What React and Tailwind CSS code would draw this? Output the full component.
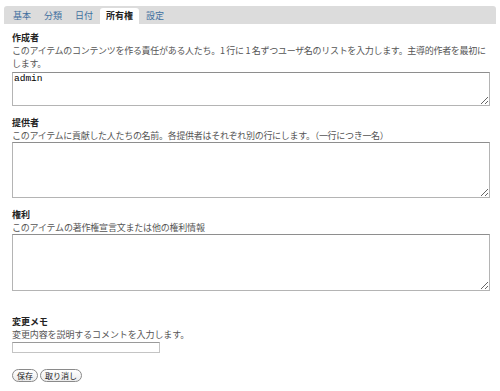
import React from 'react';

const tabs = ['基本', '分類', '日付', '所有権', '設定'];

const jp = { fontFamily: '"Noto Sans CJK JP", "Noto Sans", sans-serif' };

const Field = ({ label, children, className = '' }) => (
  <div className={className}>
    <div className="text-[9px] leading-[13px] font-bold text-[#222]">{label}</div>
    {children}
  </div>
);

const App = () => {
  return (
    <div className="w-[500px] h-[391px] bg-white overflow-hidden" style={jp}>
      {/* Tabs */}
      <div className="mx-[4px] mt-[6px] w-[492px] h-[18px] bg-[#dcdcdc] rounded-t-[3px] pt-[2px] pl-[3px] flex gap-[1px]">
        {tabs.map((t) => (
          <div
            key={t}
            className={`h-[16px] px-[6px] text-[9px] leading-[16px] ${
              t === '所有権'
                ? 'bg-white rounded-t-[3px] font-bold text-[#222]'
                : 'text-[#3f6f9f]'
            }`}
          >
            {t}
          </div>
        ))}
      </div>

      <div className="px-[12px]">
        {/* Creators */}
        <Field label="作成者" className="mt-[7px]">
          <div className="text-[9px] leading-[13px] text-[#555] tracking-[-0.3px]">
            <span className="whitespace-nowrap">このアイテムのコンテンツを作る責任がある人たち。1 行に 1 名ずつユーザ名のリストを入力します。主導的作者を最初に</span>
            <br />
            します。
          </div>
          <textarea
            defaultValue="admin"
            className="block mt-[2px] w-[478px] h-[34px] border border-[#b4b4b4] border-t-[#8e8e8e] px-[1px] py-0 text-[9.5px] leading-[12px] text-black outline-none"
            style={{ fontFamily: '"Liberation Mono", monospace' }}
          />
        </Field>

        {/* Contributors */}
        <Field label="提供者" className="mt-[10px]">
          <div className="text-[9px] leading-[13px] text-[#555] tracking-[-0.3px]">
            このアイテムに貢献した人たちの名前。各提供者はそれぞれ別の行にします。（一行につき一名）
          </div>
          <textarea className="block w-[478px] h-[56px] border border-[#b4b4b4] border-t-[#8e8e8e] p-[1px] outline-none" />
        </Field>

        {/* Rights */}
        <Field label="権利" className="mt-[10px]">
          <div className="text-[9px] leading-[13px] text-[#555] tracking-[-0.2px]">
            このアイテムの著作権宣言文または他の権利情報
          </div>
          <textarea className="block w-[478px] h-[57px] border border-[#b4b4b4] border-t-[#8e8e8e] p-[1px] outline-none" />
        </Field>

        {/* Change note */}
        <Field label="変更メモ" className="mt-[24px]">
          <div className="text-[9px] leading-[13px] text-[#555] tracking-[-0.1px]">
            変更内容を説明するコメントを入力します。
          </div>
          <input
            type="text"
            className="block mt-[1px] w-[148px] h-[11px] border border-[#c4c4c4] border-t-[#9a9a9a] p-0 outline-none"
          />
        </Field>

        {/* Buttons */}
        <div className="mt-[16px] flex gap-[2px]">
          <button className="h-[13px] px-[4px] rounded-full border border-[#8a8a8a] bg-gradient-to-b from-white to-[#ececec] text-[8px] leading-[11px] text-[#222]">
            保存
          </button>
          <button className="h-[13px] px-[4px] rounded-full border border-[#8a8a8a] bg-gradient-to-b from-white to-[#ececec] text-[8px] leading-[11px] text-[#222]">
            取り消し
          </button>
        </div>
      </div>
    </div>
  );
};

export default App;
